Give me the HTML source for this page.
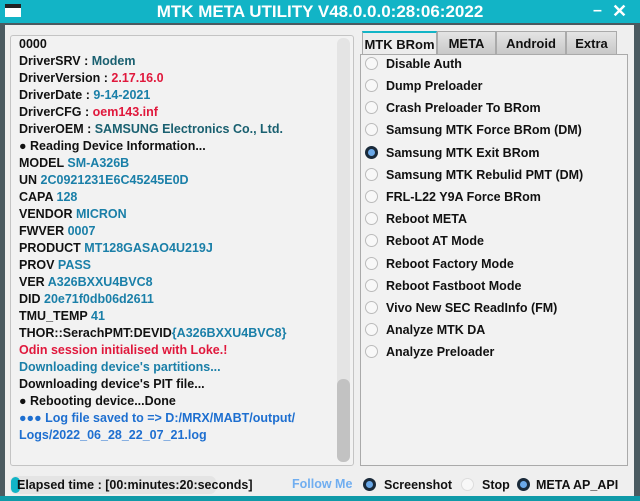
<!DOCTYPE html>
<html><head><style>
*{margin:0;padding:0;box-sizing:border-box}
body{width:640px;height:501px;overflow:hidden;background:#4a5a60;font-family:"Liberation Sans",sans-serif;font-weight:bold;position:relative}
.title{position:absolute;left:0;top:0;width:640px;height:23px;background:#12b4c6;color:#fff;font-size:17px;text-align:center;line-height:23px}
.main{position:absolute;left:5px;top:25px;width:629px;height:471px;background:#efefef}
.bottomline{position:absolute;left:0;top:496px;width:640px;height:5px;background:#0f9aa8}
.log{position:absolute;left:10px;top:35px;width:344px;height:431px;background:#f2f2f2;border:1px solid #c4c4c4;border-radius:3px}
.log div{position:absolute;left:8px;font-size:12.5px;color:#111;white-space:nowrap}
.log .b,.b{color:#1a7fa8}.log .r,.r{color:#e0183c}.log .u,.u{color:#1e6fd0}
.sb{position:absolute;left:337px;top:38px;width:13px;height:424px;background:#e4e4e4;border-radius:6px}
.th{position:absolute;left:337px;top:379px;width:13px;height:83px;background:#c2c2c2;border-radius:6px}
.tab{position:absolute;top:31px;height:24px;border:1px solid #aaa;background:linear-gradient(#e4e4e4,#c8c8c8);font-size:13px;text-align:center;line-height:23px;color:#111}
.panel{position:absolute;left:360px;top:54px;width:268px;height:412px;background:#f2f2f2;border:1px solid #aaa}
.it{position:absolute;left:365px;font-size:12.5px;color:#111;white-space:nowrap}
.rd{display:inline-block;width:13px;height:13px;border:1px solid #bbb;border-radius:50%;background:#f8f8f8;vertical-align:-2px;margin-right:8px}
.rd.on{background:#6aa8e8;border:3px solid #1a2a3a}
</style></head><body>
<div class="title">MTK META UTILITY V48.0.0.0:28:06:2022</div>
<div style="position:absolute;left:5px;top:4px;width:16px;height:13px;background:#fff;border-top:4px solid #222"></div>
<div style="position:absolute;left:593px;top:0;color:#fff;font-size:16px;line-height:22px">–</div>
<div style="position:absolute;left:612px;top:0;color:#fff;font-size:18px;line-height:22px">✕</div>
<div class="main"></div>
<div class="bottomline"></div>
<div class="log">
<div style="top:1px">0000</div>
<div style="top:18px">DriverSRV : <span style="color:#1a6070">Modem</span></div>
<div style="top:35px">DriverVersion : <span class="r">2.17.16.0</span></div>
<div style="top:52px">DriverDate : <span class="b">9-14-2021</span></div>
<div style="top:69px">DriverCFG : <span class="r">oem143.inf</span></div>
<div style="top:86px">DriverOEM : <span style="color:#1a6070">SAMSUNG Electronics Co., Ltd.</span></div>
<div style="top:103px">● Reading Device Information...</div>
<div style="top:120px">MODEL <span class="b">SM-A326B</span></div>
<div style="top:137px">UN <span class="b">2C0921231E6C45245E0D</span></div>
<div style="top:154px">CAPA <span class="b">128</span></div>
<div style="top:171px">VENDOR <span class="b">MICRON</span></div>
<div style="top:188px">FWVER <span class="b">0007</span></div>
<div style="top:205px">PRODUCT <span class="b">MT128GASAO4U219J</span></div>
<div style="top:222px">PROV <span class="b">PASS</span></div>
<div style="top:239px">VER <span class="b">A326BXXU4BVC8</span></div>
<div style="top:256px">DID <span class="b">20e71f0db06d2611</span></div>
<div style="top:273px">TMU_TEMP <span class="b">41</span></div>
<div style="top:290px">THOR::SerachPMT:DEVID<span class="b">{A326BXXU4BVC8}</span></div>
<div style="top:307px" class="r">Odin session initialised with Loke.!</div>
<div style="top:324px" class="b">Downloading device's partitions...</div>
<div style="top:341px">Downloading device's PIT file...</div>
<div style="top:358px">● Rebooting device...Done</div>
<div style="top:375px" class="u">●●● Log file saved to =&gt; D:/MRX/MABT/output/</div>
<div style="top:392px" class="u">Logs/2022_06_28_22_07_21.log</div>
</div>
<div class="sb"></div><div class="th"></div>
<div class="tab" style="left:362px;width:75px;background:#ececec;border-top:2px solid #12b4c6;height:25px">MTK BRom</div>
<div class="tab" style="left:437px;width:59px">META</div>
<div class="tab" style="left:496px;width:70px">Android</div>
<div class="tab" style="left:566px;width:51px">Extra</div>
<div class="panel"></div>
<div class="it" style="top:57px"><span class="rd"></span>Disable Auth</div>
<div class="it" style="top:79px"><span class="rd"></span>Dump Preloader</div>
<div class="it" style="top:101px"><span class="rd"></span>Crash Preloader To BRom</div>
<div class="it" style="top:123px"><span class="rd"></span>Samsung MTK Force BRom (DM)</div>
<div class="it" style="top:146px"><span class="rd on"></span>Samsung MTK Exit BRom</div>
<div class="it" style="top:168px"><span class="rd"></span>Samsung MTK Rebulid PMT (DM)</div>
<div class="it" style="top:190px"><span class="rd"></span>FRL-L22 Y9A Force BRom</div>
<div class="it" style="top:212px"><span class="rd"></span>Reboot META</div>
<div class="it" style="top:234px"><span class="rd"></span>Reboot AT Mode</div>
<div class="it" style="top:257px"><span class="rd"></span>Reboot Factory Mode</div>
<div class="it" style="top:279px"><span class="rd"></span>Reboot Fastboot Mode</div>
<div class="it" style="top:301px"><span class="rd"></span>Vivo New SEC ReadInfo (FM)</div>
<div class="it" style="top:323px"><span class="rd"></span>Analyze MTK DA</div>
<div class="it" style="top:345px"><span class="rd"></span>Analyze Preloader</div>
<div style="position:absolute;left:10px;top:476px;width:206px;height:18px;background:#e4e4e4;border-radius:6px"></div>
<div style="position:absolute;left:11px;top:477px;width:9px;height:16px;background:#12b4c6;border-radius:5px"></div>
<div style="position:absolute;left:17px;top:478px;font-size:12.5px;color:#111">Elapsed time : [00:minutes:20:seconds]</div>
<div style="position:absolute;left:292px;top:477px;font-size:12.5px;color:#70aef0">Follow Me</div>
<div class="it" style="left:363px;top:478px"><span class="rd on"></span>Screenshot</div>
<div class="it" style="left:461px;top:478px"><span class="rd" style="border-color:#ddd"></span>Stop</div>
<div class="it" style="left:517px;top:478px"><span class="rd on" style="margin-right:6px"></span>META AP_API</div>
</body></html>
